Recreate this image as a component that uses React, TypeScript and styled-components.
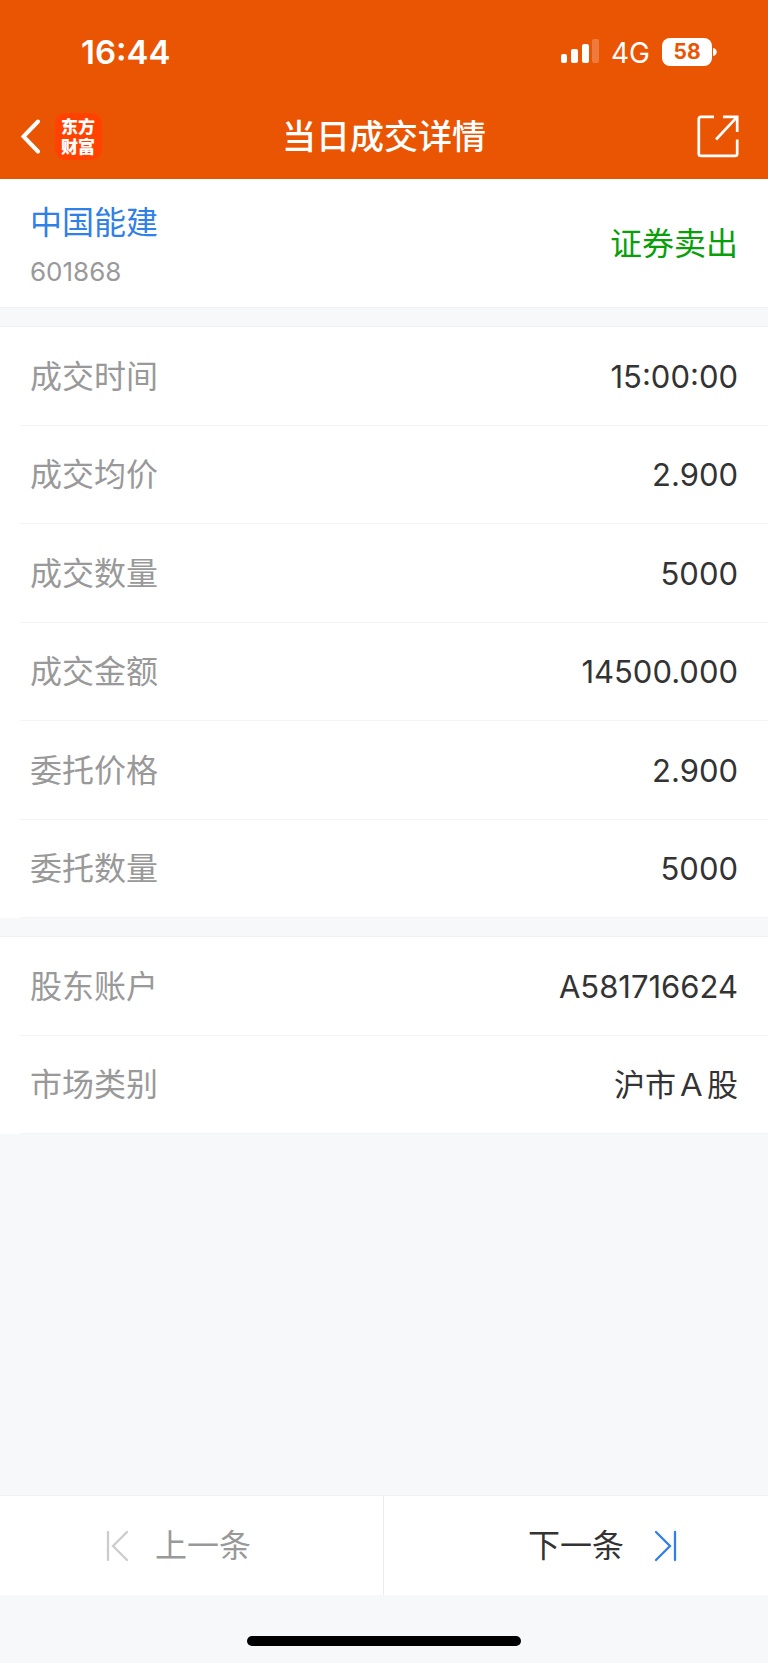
import React from "react";
import styled, { createGlobalStyle } from "styled-components";

const GlobalStyle = createGlobalStyle`
  * { box-sizing: border-box; }
  body {
    margin: 0;
    background: #f6f8fa;
    color: #333;
    font-family: Inter, "Noto Sans CJK SC", sans-serif;
  }
  button { font-family: inherit; }
`;

const Page = styled.div`
  display: flex;
  flex-direction: column;
  min-height: 100vh;
`;

const Header = styled.header`
  background: #ea5504;
  color: #fff;
`;

const StatusBar = styled.div`
  display: flex;
  align-items: center;
  justify-content: space-between;
  height: 94px;
  padding: 9px 51px 0 81px;
`;

const Clock = styled.time`
  font-size: 33px;
  line-height: 40px;
  font-weight: 600;
`;

const StatusGroup = styled.div`
  display: flex;
  align-items: center;
`;

const Network = styled.span`
  margin: 2px 12px 0;
  font-size: 28px;
  line-height: 32px;
`;

const Battery = styled.span`
  display: flex;
  align-items: center;
  gap: 1px;
`;

const BatteryLevel = styled.span`
  width: 50px;
  border-radius: 8px;
  background: #fff;
  color: #ea5504;
  font-size: 21px;
  line-height: 28px;
  font-weight: 700;
  text-align: center;
`;

const NavBar = styled.nav`
  display: grid;
  grid-template-columns: 1fr auto 1fr;
  align-items: center;
  height: 85px;
  padding: 0 20px;
`;

const NavStart = styled.div`
  display: flex;
  align-items: center;
  gap: 14px;
`;

const IconButton = styled.button`
  display: flex;
  padding: 0;
  border: 0;
  background: none;
  color: inherit;
`;

const ShareButton = styled(IconButton)`
  justify-self: end;
  margin-right: 8px;
`;

const Brand = styled.span`
  width: 47px;
  height: 47px;
  padding: 3px 6px 0;
  border-radius: 11px;
  background: #ff4200;
  font-family: "Noto Sans CJK SC", sans-serif;
  font-size: 17px;
  line-height: 20px;
  font-weight: 900;
`;

const Title = styled.h1`
  margin: 0;
  font-size: 34px;
  line-height: 48px;
  font-weight: 500;
`;

const Stock = styled.section`
  display: flex;
  align-items: center;
  justify-content: space-between;
  min-height: 129px;
  padding: 2px 30px 0;
  border-bottom: 1px solid #f0f1f3;
  background: #fff;
`;

const StockName = styled.a`
  display: block;
  color: #2f80e7;
  font-size: 32px;
  line-height: 48px;
  text-decoration: none;
`;

const StockCode = styled.div`
  margin-top: 7px;
  color: #999;
  font-size: 26px;
  line-height: 36px;
`;

const Side = styled.div`
  color: #0a9f0a;
  font-size: 32px;
  line-height: 48px;
`;

const Details = styled.dl<{ $height: number }>`
  display: grid;
  grid-auto-rows: 1fr;
  min-height: ${(p) => p.$height}px;
  margin: 18px 0 0;
  padding-left: 20px;
  border-top: 1px solid #eeeff1;
  background: #fff;
`;

const Row = styled.div`
  display: flex;
  align-items: center;
  justify-content: space-between;
  padding: 2px 30px 0 10px;
  border-bottom: 1px solid #f3f4f5;
`;

const Label = styled.dt`
  color: #999;
  font-size: 32px;
  line-height: 48px;
`;

const Value = styled.dd`
  margin: 0;
  font-size: 31px;
  line-height: 48px;
`;

const Footer = styled.footer`
  margin-top: auto;
`;

const Pager = styled.div`
  display: grid;
  grid-template-columns: 1fr 1fr;
  min-height: 100px;
  border-top: 1px solid #eef0f2;
  background: #fff;
`;

const PagerButton = styled.button<{ $end?: boolean }>`
  display: flex;
  align-items: center;
  justify-content: ${(p) => (p.$end ? "flex-end" : "flex-start")};
  gap: ${(p) => (p.$end ? 30 : 26)}px;
  padding: ${(p) => (p.$end ? "0 90px 0 0" : "0 0 0 105px")};
  border: 0;
  border-right: ${(p) => (p.$end ? "0" : "1px solid #e8eaec")};
  background: none;
  color: #333;
  font-size: 32px;
  line-height: 48px;

  &:disabled { color: #999; }
`;

const HomeArea = styled.div`
  display: flex;
  justify-content: center;
  padding: 41px 0 17px;
`;

const HomeBar = styled.div`
  width: 274px;
  height: 10px;
  border-radius: 5px;
  background: #000;
`;

const SignalIcon = () => (
  <svg width="38" height="25" viewBox="1 0 38 25" fill="#fff" aria-hidden="true">
    <rect x="1" y="15" width="6" height="9" rx="2" />
    <rect x="11" y="10" width="7" height="14" rx="2" />
    <rect x="22" y="5" width="7" height="19" rx="2" />
    <rect x="32" y="0" width="7" height="24" rx="2" opacity="0.22" />
  </svg>
);

const BatteryTip = () => (
  <svg width="4" height="8" viewBox="0 0 4 8" fill="#fff" aria-hidden="true">
    <path d="M0 0C5 1 5 7 0 8Z" />
  </svg>
);

const BackIcon = () => (
  <svg width="21" height="35" viewBox="0 0 21 35" fill="none" stroke="#fff" strokeWidth="4" strokeLinecap="round" strokeLinejoin="miter" aria-hidden="true">
    <path d="M18 2.5L3.5 17.5L18 32.5" />
  </svg>
);

const ShareIcon = () => (
  <svg width="43" height="43" viewBox="0 0 43 43" fill="none" stroke="#fff" strokeWidth="2.7" aria-hidden="true">
    <path d="M17 1.8H4Q1.8 1.8 1.8 4V38.7Q1.8 40.9 4 40.9H38Q40.2 40.9 40.2 38.7V24.5" />
    <path d="M26 1.8H40.2V17M39.7 2.3L19 24.5" />
  </svg>
);

const PreviousIcon = () => (
  <svg width="24" height="32" viewBox="0 0 24 32" fill="none" stroke="#ccc" strokeWidth="2.3" strokeLinecap="round" aria-hidden="true">
    <path d="M3 2V30M22 2L8 16L22 30" />
  </svg>
);

const NextIcon = () => (
  <svg width="24" height="32" viewBox="0 0 24 32" fill="none" stroke="#2f80e7" strokeWidth="2.3" strokeLinecap="round" aria-hidden="true">
    <path d="M21 2V30M2 2L16 16L2 30" />
  </svg>
);

const trade = [
  ["成交时间", "15:00:00"],
  ["成交均价", "2.900"],
  ["成交数量", "5000"],
  ["成交金额", "14500.000"],
  ["委托价格", "2.900"],
  ["委托数量", "5000"],
];

const account = [
  ["股东账户", "A581716624"],
  ["市场类别", "沪市Ａ股"],
];

function DetailList({ rows, height }: { rows: string[][]; height: number }) {
  return (
    <Details $height={height}>
      {rows.map(([label, value]) => (
        <Row key={label}>
          <Label>{label}</Label>
          <Value>{value}</Value>
        </Row>
      ))}
    </Details>
  );
}

export default function App() {
  return (
    <Page lang="zh-CN">
      <GlobalStyle />
      <Header>
        <StatusBar>
          <Clock>16:44</Clock>
          <StatusGroup>
            <SignalIcon />
            <Network>4G</Network>
            <Battery>
              <BatteryLevel>58</BatteryLevel>
              <BatteryTip />
            </Battery>
          </StatusGroup>
        </StatusBar>
        <NavBar>
          <NavStart>
            <IconButton type="button" aria-label="返回">
              <BackIcon />
            </IconButton>
            <Brand>东方财富</Brand>
          </NavStart>
          <Title>当日成交详情</Title>
          <ShareButton type="button" aria-label="分享">
            <ShareIcon />
          </ShareButton>
        </NavBar>
      </Header>
      <main>
        <Stock>
          <div>
            <StockName href="#stock">中国能建</StockName>
            <StockCode>601868</StockCode>
          </div>
          <Side>证券卖出</Side>
        </Stock>
        <DetailList rows={trade} height={592} />
        <DetailList rows={account} height={198} />
      </main>
      <Footer>
        <Pager>
          <PagerButton type="button" disabled>
            <PreviousIcon />
            上一条
          </PagerButton>
          <PagerButton type="button" $end>
            下一条
            <NextIcon />
          </PagerButton>
        </Pager>
        <HomeArea>
          <HomeBar />
        </HomeArea>
      </Footer>
    </Page>
  );
}
